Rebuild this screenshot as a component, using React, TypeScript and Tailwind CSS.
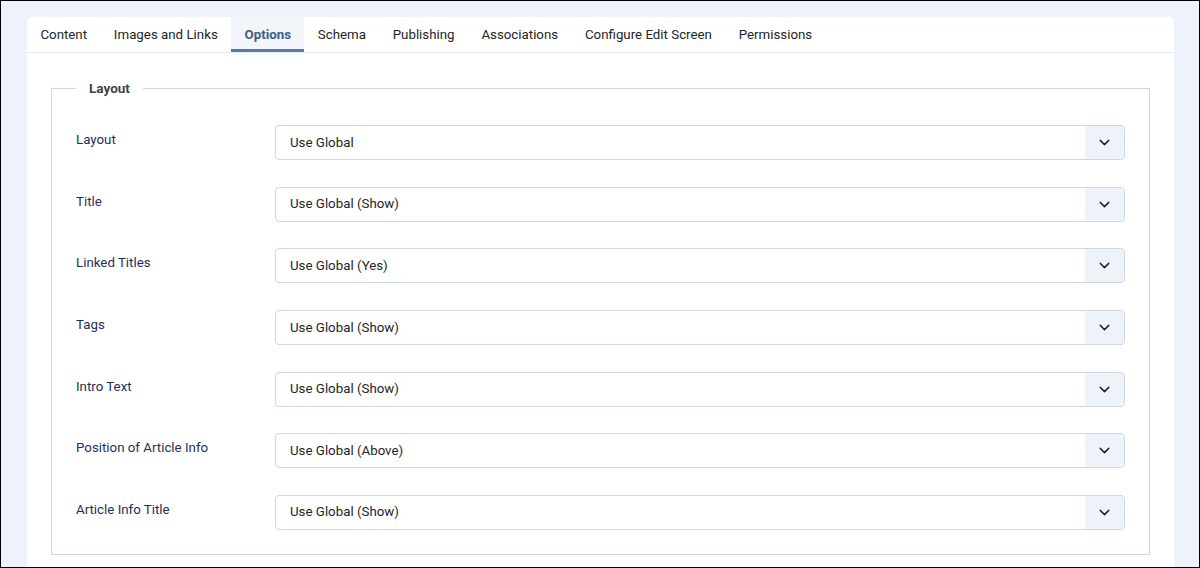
import { ChevronDown } from "lucide-react";

const TABS = [
  "Content",
  "Images and Links",
  "Options",
  "Schema",
  "Publishing",
  "Associations",
  "Configure Edit Screen",
  "Permissions",
];

const FIELDS = [
  { label: "Layout", value: "Use Global" },
  { label: "Title", value: "Use Global (Show)" },
  { label: "Linked Titles", value: "Use Global (Yes)" },
  { label: "Tags", value: "Use Global (Show)" },
  { label: "Intro Text", value: "Use Global (Show)" },
  { label: "Position of Article Info", value: "Use Global (Above)" },
  { label: "Article Info Title", value: "Use Global (Show)" },
];

function SelectBox({ value }: { value: string }) {
  return (
    <div className="flex h-[35px] flex-1 overflow-hidden rounded-[4px] border border-[#cdd7e5] bg-white">
      <div className="flex flex-1 items-center pl-[14px] text-[13.3px] text-[#22262a]">{value}</div>
      <div className="flex w-[39px] items-center justify-center bg-[#eef3fa]">
        <ChevronDown className="h-[17px] w-[17px] text-[#222]" strokeWidth={2} />
      </div>
    </div>
  );
}

export default function App() {
  return (
    <div
      className="h-[568px] w-[1200px] overflow-hidden border border-black bg-[#eef3fb]"
      style={{ fontFamily: "Roboto, 'Noto Sans', sans-serif" }}
    >
      <div className="ml-[26px] mt-[16px] w-[1147px] rounded-t-[5px] bg-white">
        <div className="flex h-[36px] border-b border-[#e4eaf3]">
          {TABS.map((t) => {
            const active = t === "Options";
            return (
              <div
                key={t}
                className={`flex items-center px-[13.4px] pt-[1px] text-[13.3px] ${
                  active
                    ? "border-b-[3px] border-[#587aa8] bg-[#f2f5f9] pt-[4px] font-bold text-[#3d5e8f]"
                    : "text-[#22262a]"
                }`}
              >
                {t}
              </div>
            );
          })}
        </div>
        <div className="px-[24px] pt-[25px] pb-[24px]">
          <fieldset className="border border-[#cbd6e6] px-[24px] pb-[24px] pt-[27px]">
            <legend className="px-[13px] text-[13.5px] font-bold text-[#3f444a]">Layout</legend>
            <div className="flex flex-col gap-[26.6px]">
              {FIELDS.map((f) => (
                <div key={f.label} className="flex">
                  <div className="w-[199px] pt-[5px] text-[13.3px] text-[#1d3059]">{f.label}</div>
                  <SelectBox value={f.value} />
                </div>
              ))}
            </div>
          </fieldset>
        </div>
      </div>
    </div>
  );
}
